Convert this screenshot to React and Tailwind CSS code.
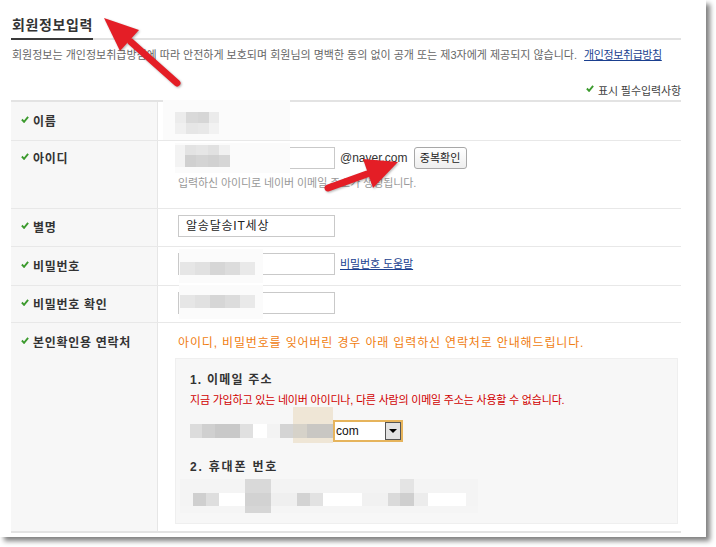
import React from 'react';

const Check = () => (
  <svg viewBox="0 0 10 9" className="w-[8px] h-[7px] mr-[4px] -mt-[5px] shrink-0">
    <path d="M1 4.5 L3.8 7.5 L9 1.2" fill="none" stroke="#3b9a2d" strokeWidth="2.4" />
  </svg>
);

// pixelated (mosaic) areas that hide personal data
function Pixels({ rows, className = '' }) {
  return (
    <div className={`flex flex-col ${className}`}>
      {rows.map((row, i) => (
        <div key={i} className={`flex ${row.h}`}>
          {row.cells.map((c, j) => (
            <div key={j} className={c} />
          ))}
        </div>
      ))}
    </div>
  );
}

const nameRows = [
  { h: 'h-[11px]', cells: ['w-[11px] bg-[#ececec]', 'w-[12px] bg-[#d9d9d9]', 'w-[11px] bg-[#d6d6d6]', 'w-[10px] bg-[#ebebeb]'] },
  { h: 'h-[11px]', cells: ['w-[11px] bg-[#f0f0f0]', 'w-[12px] bg-[#e6e6e6]', 'w-[11px] bg-[#e8e8e8]', 'w-[10px] bg-[#f2f2f2]'] },
];

const idRows = [
  { h: 'h-[10px]', cells: ['w-[10px] bg-[#f3f3f3]', 'w-[11px] bg-[#e3e3e3]', 'w-[12px] bg-[#e6e6e6]', 'w-[11px] bg-[#e1e1e1]', 'w-[11px] bg-[#f1f1f1]'] },
  { h: 'h-[12px]', cells: ['w-[10px] bg-[#f3f3f3]', 'w-[11px] bg-[#d0d0d0]', 'w-[12px] bg-[#d4d4d4]', 'w-[11px] bg-[#d1d1d1]', 'w-[11px] bg-[#d6d6d6]'] },
];

const pwRows = [
  { h: 'h-[13px]', cells: ['w-[15px] bg-[#e6e6e6]', 'w-[15px] bg-[#e1e1e1]', 'w-[15px] bg-[#d6d6d6]', 'w-[15px] bg-[#dcdcdc]', 'w-[15px] bg-[#e9e9e9]'] },
];

const mailRows = [
  {
    h: 'h-[14px]',
    cells: [
      'w-[12px] bg-[#dcdcdc]',
      'w-[13px] bg-[#d0d0d0]',
      'w-[25px] bg-[#c9c9c9]',
      'w-[13px] bg-[#e0e0e0]',
      'w-[14px] bg-[#ffffff]',
      'w-[13px] bg-[#f3f3f3]',
      'w-[13px] bg-[#d4d4d4]',
      'w-[14px] bg-[#d6d2c9]',
      'w-[26px] bg-[#c9c7c3]',
    ],
  },
];

const phoneRows = [
  { h: 'h-[14px]', cells: ['w-[65px] bg-[#f4f4f4]', 'w-[26px] bg-[#d9d9d9]', 'w-[129px] bg-[#f3f3f3]', 'w-[14px] bg-[#e4e4e4]', 'w-[64px] bg-[#f4f4f4]'] },
  {
    h: 'h-[13px]',
    cells: [
      'w-[13px] bg-[#f4f4f4]',
      'w-[13px] bg-[#cfcfcf]',
      'w-[13px] bg-[#dedede]',
      'w-[26px] bg-[#ffffff]',
      'w-[26px] bg-[#d2d2d2]',
      'w-[26px] bg-[#efefef]',
      'w-[13px] bg-[#d3d3d3]',
      'w-[13px] bg-[#e2e2e2]',
      'w-[39px] bg-[#ffffff]',
      'w-[26px] bg-[#f1f1f1]',
      'w-[12px] bg-[#dadada]',
      'w-[14px] bg-[#cfcfcf]',
      'w-[14px] bg-[#ececec]',
      'w-[38px] bg-[#ffffff]',
      'w-[12px] bg-[#f4f4f4]',
    ],
  },
  { h: 'h-[7px]', cells: ['w-[65px] bg-[#f5f5f5]', 'w-[26px] bg-[#d6d6d6]', 'w-[207px] bg-[#f5f5f5]'] },
];

const small = 'text-[11px] tracking-[-0.1px] leading-[16px]';

function Label({ children, className = 'pt-[12px]' }) {
  return (
    <div className={`w-[147px] shrink-0 bg-[#f7f7f7] border-r border-[#e6e6e6] pl-[10px] ${className}`}>
      <div className="flex items-center text-[12px] leading-[16px] font-bold tracking-[0.7px] text-[#333]">
        <Check />
        {children}
      </div>
    </div>
  );
}

const Input = ({ children }) => (
  <div className="w-[157px] h-[22px] border border-[#c9c9c9] bg-white flex items-center pl-[7px] text-[12px] tracking-[0.8px] text-[#222]">
    {children}
  </div>
);

export default function App() {
  return (
    <div className="w-[716px] h-[547px] bg-white relative overflow-hidden font-['Liberation_Sans','Noto_Sans_CJK_KR',sans-serif]">
      <div className="w-[706px] h-[537px] bg-white shadow-[4px_4px_5px_rgba(0,0,0,0.5)] pl-[11px] pr-[25px] pt-[15px]">
        {/* Title */}
        <div className="flex">
          <h1 className="w-[82px] pl-[1px] pb-[3px] border-b-2 border-[#3a3a3a] text-[14px] leading-[20px] font-bold tracking-[0.6px] text-[#333] whitespace-nowrap">
            회원정보입력
          </h1>
          <div className="flex-1 border-b-2 border-[#e2e2e2]" />
        </div>

        <p className="mt-[7px] pl-[1px] text-[#666] whitespace-nowrap text-[11px] tracking-[0px] leading-[16px]">
          회원정보는 개인정보취급방침에 따라 안전하게 보호되며 회원님의 명백한 동의 없이 공개 또는 제3자에게 제공되지 않습니다.
          <a className="ml-[7px] text-[#1a3f8f] underline tracking-[-0.4px]">개인정보취급방침</a>
        </p>

        <div className={`mt-[20px] flex items-center justify-end text-[#444] ${small}`}>
          <Check />
          표시 필수입력사항
        </div>

        {/* Form table */}
        <div className="mt-[1px] border-t-2 border-b-2 border-[#e3e3e3]">
          {/* 이름 */}
          <div className="flex h-[39px] border-b border-[#e8e8e8]">
            <Label>이름</Label>
            <div className="flex-1 relative">
              <div className="absolute left-[5px] -top-[2px] w-[127px] h-[40px] bg-[#fbfbfb] pl-[12px] pt-[12px]">
                <Pixels rows={nameRows} />
              </div>
            </div>
          </div>

          {/* 아이디 */}
          <div className="flex h-[68px] border-b border-[#e8e8e8]">
            <Label className="pt-[10px]">아이디</Label>
            <div className="flex-1 relative pl-[20px] pt-[6px]">
              <div className="flex items-center">
                <Input />
                <span className="ml-[5px] text-[12px] text-[#333]">@naver.com</span>
                <button className="ml-[6px] w-[53px] h-[22px] border border-[#a8a8a8] rounded-[3px] bg-gradient-to-b from-white to-[#eeeeee] text-[11px] tracking-[0px] text-[#222]">
                  중복확인
                </button>
              </div>
              <p className={`mt-[6px] text-[#999] ${small}`}>입력하신 아이디로 네이버 이메일 주소가 생성됩니다.</p>
              <div className="absolute left-[17px] top-[2px] w-[115px] h-[30px] bg-[#fbfbfb] pt-[2px]">
                <Pixels rows={idRows} />
              </div>
            </div>
          </div>

          {/* 별명 */}
          <div className="flex h-[38px] border-b border-[#e8e8e8]">
            <Label className="pt-[11px]">별명</Label>
            <div className="flex-1 pl-[20px] pt-[6px]">
              <Input>알송달송IT세상</Input>
            </div>
          </div>

          {/* 비밀번호 */}
          <div className="flex h-[39px] border-b border-[#e8e8e8]">
            <Label>비밀번호</Label>
            <div className="flex-1 relative pl-[20px] pt-[6px]">
              <div className="flex items-center">
                <Input />
                <a className="ml-[5px] text-[#1a3f8f] underline text-[11px] tracking-[-0.1px] leading-[16px]">비밀번호 도움말</a>
              </div>
              <div className="absolute left-[21px] top-[2px] w-[84px] h-[34px] bg-[#fbfbfb] pt-[13px] pl-[1px]">
                <Pixels rows={pwRows} />
              </div>
            </div>
          </div>

          {/* 비밀번호 확인 */}
          <div className="flex h-[37px] border-b border-[#e8e8e8]">
            <Label className="pt-[11px]">비밀번호 확인</Label>
            <div className="flex-1 relative pl-[20px] pt-[6px]">
              <Input />
              <div className="absolute left-[21px] -top-[1px] w-[84px] h-[34px] bg-[#fbfbfb] pt-[10px] pl-[1px]">
                <Pixels rows={pwRows} />
              </div>
            </div>
          </div>

          {/* 본인확인용 연락처 */}
          <div className="flex h-[208px]">
            <Label>본인확인용 연락처</Label>
            <div className="flex-1 pl-[20px] pr-[3px] pt-[12px]">
              <p className="text-[12px] leading-[16px] tracking-[0.85px] text-[#f07d11] whitespace-nowrap">
                아이디, 비밀번호를 잊어버린 경우 아래 입력하신 연락처로 안내해드립니다.
              </p>
              <div className="-ml-[3px] mt-[7px] h-[166px] bg-[#f7f7f7] border border-[#efefef] pl-[14px] pt-[13px]">
                <h3 className="text-[12px] leading-[16px] font-bold tracking-[1.2px] text-[#333]">1. 이메일 주소</h3>
                <p className="mt-[4px] text-[#d10000] whitespace-nowrap text-[11px] tracking-[-0.2px] leading-[16px]">
                  지금 가입하고 있는 네이버 아이디나, 다른 사람의 이메일 주소는 사용할 수 없습니다.
                </p>
                <div className="mt-[12px] flex items-center h-[22px]">
                  <div className="relative w-[143px] h-[22px] pt-[4px]">
                    <div className="absolute left-[103px] -top-[13px] w-[40px] h-[36px] bg-[#efe6d6]" />
                    <Pixels rows={mailRows} className="relative" />
                  </div>
                  <div className="w-[70px] h-[22px] border-2 border-[#e6b45c] bg-white flex items-center">
                    <span className="flex-1 pl-[1px] text-[12px] text-[#111]">com</span>
                    <div className="w-[16px] h-[18px] bg-[#e2e2e2] border border-[#555] flex items-center justify-center">
                      <div className="w-0 h-0 border-l-[4px] border-r-[4px] border-t-[4px] border-l-transparent border-r-transparent border-t-black" />
                    </div>
                  </div>
                </div>
                <h3 className="mt-[17px] text-[12px] leading-[16px] font-bold tracking-[1.8px] text-[#333]">2. 휴대폰 번호</h3>
                <div className="mt-[4px] -ml-[10px]">
                  <Pixels rows={phoneRows} />
                </div>
              </div>
            </div>
          </div>
        </div>
      </div>

      {/* annotation arrows */}
      <svg className="absolute inset-0 pointer-events-none drop-shadow-[1px_1px_1px_rgba(0,0,0,0.3)]" width="716" height="547">
        <line x1="177" y1="83" x2="131" y2="42" stroke="#e41e26" strokeWidth="7" strokeLinecap="round" />
        <polygon points="104,18 139,30 120,51" fill="#e41e26" />
        <line x1="328" y1="188" x2="367" y2="174" stroke="#e41e26" strokeWidth="7" strokeLinecap="round" />
        <polygon points="398,162 373,188 363,159" fill="#e41e26" />
      </svg>
    </div>
  );
}
